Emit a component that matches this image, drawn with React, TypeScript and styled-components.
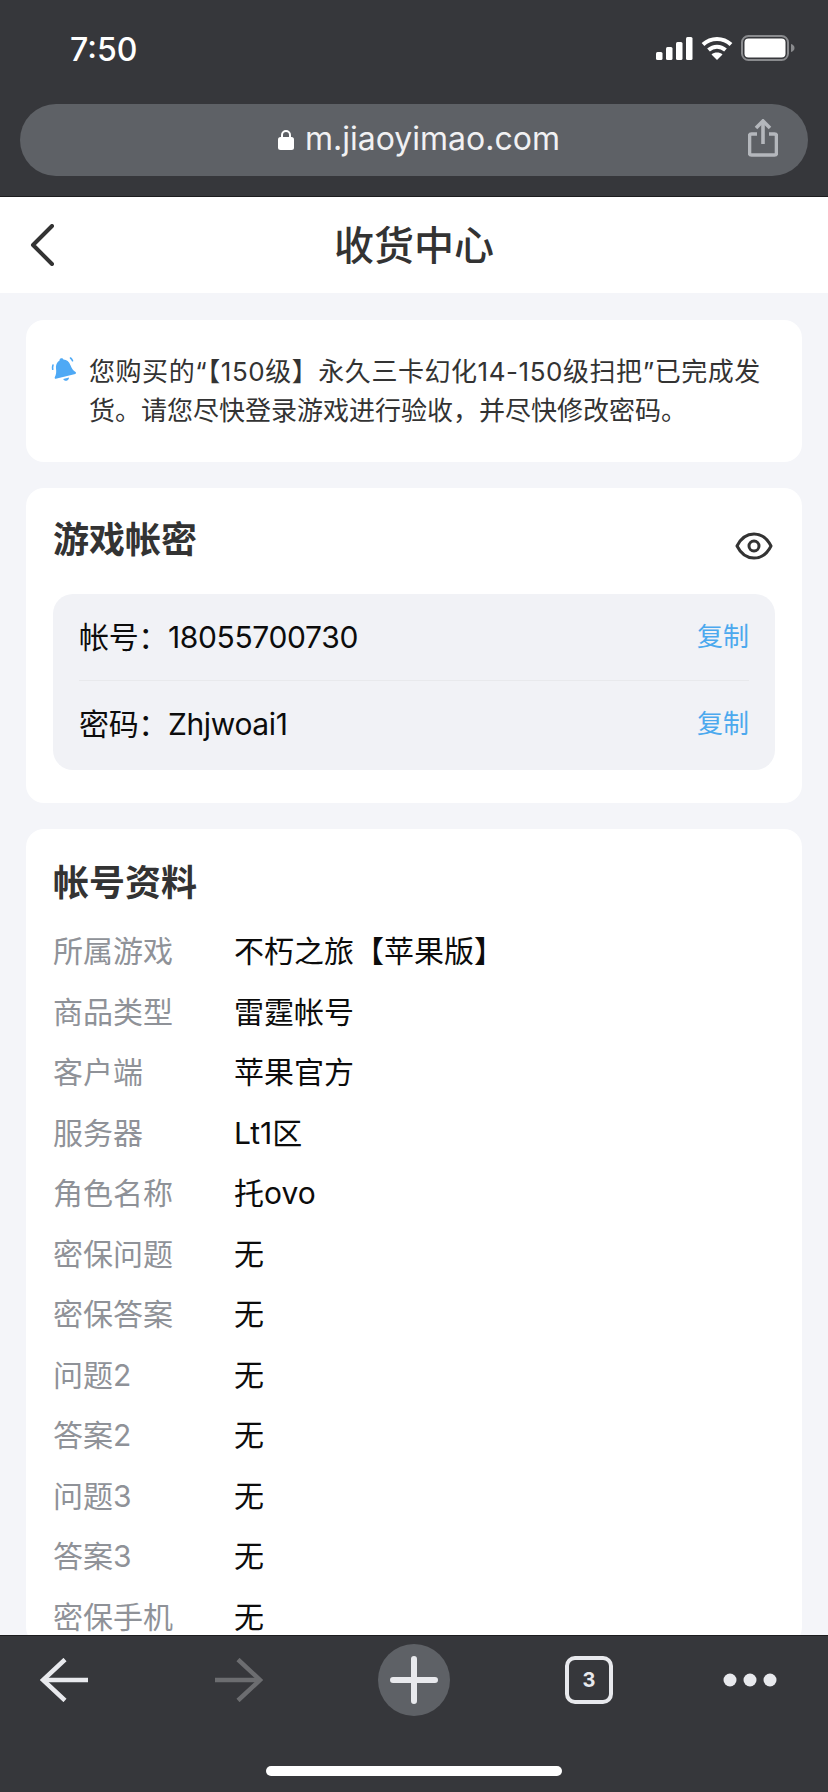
import React from 'react';
import styled, { createGlobalStyle } from 'styled-components';

const GlobalStyle = createGlobalStyle`
  html, body {
    margin: 0;
    padding: 0;
    background: #f4f5f9;
  }
  * {
    box-sizing: border-box;
  }
`;

const FONT = `Inter, "Noto Sans CJK SC", sans-serif`;

const Screen = styled.div`
  width: 828px;
  height: 1792px;
  display: flex;
  flex-direction: column;
  overflow: hidden;
  font-family: ${FONT};
  background: #f4f5f9;
`;

const TopChrome = styled.div`
  height: 197px;
  flex: none;
  background: #36373b;
  border-bottom: 1px solid #1c1c1e;
  padding: 0 20px;
`;

const StatusBar = styled.div`
  height: 104px;
  display: flex;
  align-items: flex-start;
  justify-content: space-between;
  padding: 32px 0 0 50px;
`;

const Time = styled.span`
  color: #fff;
  font-size: 32px;
  line-height: 36px;
  font-weight: 500;
`;

const StatusIcons = styled.div`
  display: flex;
  align-items: center;
  gap: 8px;
  margin-top: 3px;
  margin-right: 13px;
`;

const UrlBar = styled.div`
  height: 72px;
  width: 788px;
  border-radius: 36px;
  background: #5e6166;
  display: flex;
  align-items: center;
  justify-content: center;
  gap: 11px;
  padding: 0 0 2px 10px;
  position: relative;
`;

const UrlText = styled.span`
  color: #f1f1f3;
  font-size: 32px;
  line-height: 40px;
  font-weight: 400;
`;

const ShareButton = styled.span`
  position: absolute;
  right: 30px;
  top: 15px;
  display: flex;
`;

const NavBar = styled.header`
  height: 96px;
  flex: none;
  background: #fff;
  display: flex;
  align-items: center;
  justify-content: center;
  position: relative;
`;

const BackButton = styled.span`
  position: absolute;
  left: 29px;
  top: 27px;
  display: flex;
`;

const NavTitle = styled.h1`
  margin: 2px 0 0;
  color: #333;
  font-size: 40px;
  line-height: 50px;
  font-weight: 500;
`;

const Content = styled.main`
  flex: 1;
  min-height: 0;
  overflow: hidden;
  padding: 27px 26px 0;
  display: flex;
  flex-direction: column;
  gap: 26px;
`;

const Card = styled.section`
  flex: none;
  background: #fff;
  border-radius: 18px;
`;

const NoticeCard = styled(Card)`
  height: 142px;
  padding: 32px 30px 0 24px;
  display: flex;
  gap: 11px;
`;

const NoticeText = styled.p`
  margin: 0;
  color: #333;
  font-size: 26px;
  line-height: 39px;

  &::first-line {
    letter-spacing: 0.55px;
  }
`;

const BellWrap = styled.span`
  flex: none;
  margin-top: 3px;
  display: flex;
`;

const AccountCard = styled(Card)`
  height: 315px;
  padding: 29px 27px 0;
`;

const CardHeader = styled.div`
  display: flex;
  align-items: flex-start;
  justify-content: space-between;
  height: 77px;
`;

const CardTitle = styled.h2`
  margin: 0;
  color: #333;
  font-size: 36px;
  line-height: 46px;
  font-weight: 700;
`;

const EyeWrap = styled.span`
  display: flex;
  margin: 15px 2px 0 0;
`;

const CredentialPanel = styled.div`
  height: 176px;
  border-radius: 20px;
  background: #f1f2f6;
  padding: 0 26px;
`;

const CredentialRow = styled.div<{ $divided?: boolean }>`
  height: ${props => (props.$divided ? '87px' : '89px')};
  padding-bottom: ${props => (props.$divided ? '5px' : '8px')};
  display: flex;
  align-items: center;
  justify-content: space-between;
  border-bottom: ${props => (props.$divided ? '1px solid #e8e9ec' : 'none')};
  font-size: 30px;
  letter-spacing: -0.35px;
  color: #0c0c0c;
`;

const CopyLink = styled.span`
  color: #4ca9ee;
  font-size: 26px;
  letter-spacing: 0;
`;

const ProfileCard = styled(Card)`
  padding: 31px 27px 0;
`;

const ProfileTitle = styled(CardTitle)`
  margin-bottom: 13px;
`;

const ProfileRow = styled.div`
  height: 60.5px;
  display: flex;
  align-items: center;
  font-size: 30px;
`;

const ProfileLabel = styled.span`
  width: 181px;
  flex: none;
  color: #8f9298;
`;

const ProfileValue = styled.span`
  color: #0c0c0c;
`;

const BottomChrome = styled.footer`
  height: 157px;
  flex: none;
  background: #36373b;
  border-top: 1px solid #1c1c1e;
  display: flex;
  flex-direction: column;
  align-items: center;
`;

const ToolRow = styled.div`
  width: 100%;
  height: 130px;
  padding: 8px 0 50px 40px;
  display: flex;
  align-items: center;
`;

const ToolCell = styled.span<{ $gap: number }>`
  flex: none;
  margin-left: ${props => props.$gap}px;
  display: flex;
`;

const PlusCircle = styled.span`
  width: 72px;
  height: 72px;
  border-radius: 50%;
  background: #5e6166;
  display: flex;
  align-items: center;
  justify-content: center;
`;

const TabCount = styled.span`
  width: 48px;
  height: 48px;
  border: 4px solid #e8e9ed;
  border-radius: 10px;
  color: #e8e9ed;
  font-size: 20px;
  font-weight: 700;
  display: flex;
  align-items: center;
  justify-content: center;
`;

const HomeIndicator = styled.div`
  width: 296px;
  height: 10px;
  border-radius: 5px;
  background: #fff;
`;

const profile: [string, string][] = [
  ['所属游戏', '不朽之旅【苹果版】'],
  ['商品类型', '雷霆帐号'],
  ['客户端', '苹果官方'],
  ['服务器', 'Lt1区'],
  ['角色名称', '托ovo'],
  ['密保问题', '无'],
  ['密保答案', '无'],
  ['问题2', '无'],
  ['答案2', '无'],
  ['问题3', '无'],
  ['答案3', '无'],
  ['密保手机', '无'],
];

const Signal = () => (
  <svg width="37" height="23" viewBox="0 0 37 23" fill="#fff">
    <rect x="0" y="15" width="6.5" height="8" rx="1.5" />
    <rect x="10" y="10" width="6.5" height="13" rx="1.5" />
    <rect x="20" y="5" width="6.5" height="18" rx="1.5" />
    <rect x="30" y="0" width="6.5" height="23" rx="1.5" />
  </svg>
);

const Wifi = () => (
  <svg width="32" height="24" viewBox="0 0 32 24" fill="none" stroke="#fff" strokeWidth="4">
    <path d="M2 8.5C10 1 22 1 30 8.5" />
    <path d="M7.5 14C12.5 9.5 19.5 9.5 24.5 14" />
    <path d="M16 24l-5.500-5.500c3-2.600 8-2.600 11 0z" fill="#fff" stroke="none" />
  </svg>
);

const Battery = () => (
  <svg width="54" height="26" viewBox="0 0 54 26" fill="none">
    <rect x="1" y="1" width="46" height="24" rx="6.5" stroke="#8a8b8e" strokeWidth="2" />
    <rect x="3.5" y="3.5" width="41" height="19" rx="4" fill="#fff" />
    <path d="M50 9c2 .6 3.500 2 3.500 4s-1.500 3.400-3.500 4z" fill="#8a8b8e" />
  </svg>
);

const Lock = () => (
  <svg width="16" height="21" viewBox="0 0 16 21">
    <path d="M4 9V6a4 4 0 0 1 8 0v3" fill="none" stroke="#fff" strokeWidth="2" />
    <rect x="0" y="8" width="16" height="13" rx="2.500" fill="#fff" />
  </svg>
);

const Share = () => (
  <svg width="30" height="38" viewBox="0 0 30 38" fill="none" stroke="#b4b7bc" strokeWidth="3.600">
    <path d="M9 15H3.500a2 2 0 0 0-2 2v17a2 2 0 0 0 2 2h23a2 2 0 0 0 2-2V17a2 2 0 0 0-2-2H21" />
    <path d="M15 25V3" />
    <path d="M8 9l7-7 7 7" />
  </svg>
);

const Chevron = () => (
  <svg width="26" height="42" viewBox="0 0 26 42" fill="none" stroke="#333" strokeWidth="4" strokeLinecap="round">
    <path d="M23 2L4 21l19 19" strokeLinejoin="round" />
  </svg>
);

const Bell = () => (
  <svg width="28" height="30" viewBox="0 0 28 30" fill="#4ea9f5">
    <g transform="rotate(-14 14 15)">
      <path d="M14 3c1 0 1.800.7 2 1.600 3.200 1 5 3.600 5.400 7 .4 3.600 1.300 6 3.300 8.200.6.700.2 1.700-.7 1.700H4c-.9 0-1.300-1-.7-1.700 2-2.200 2.900-4.600 3.300-8.200.4-3.400 2.200-6 5.400-7 .2-.9 1-1.600 2-1.600z" />
      <path d="M11 23.500h6c-.4 1.700-1.500 2.500-3 2.500s-2.600-.8-3-2.500z" />
    </g>
    <path d="M3 10c-.5 1.400-.6 2.800-.3 4.300" fill="none" stroke="#4ea9f5" strokeWidth="1.600" strokeLinecap="round" />
    <path d="M20.500 3c.9.7 1.600 1.600 2 2.700" fill="none" stroke="#4ea9f5" strokeWidth="1.600" strokeLinecap="round" />
  </svg>
);

const Eye = () => (
  <svg width="38" height="28" viewBox="0 0 38 28" fill="none" stroke="#333" strokeWidth="3">
    <path d="M2 14C6 6 12 2 19 2s13 4 17 12c-4 8-10 12-17 12S6 22 2 14z" strokeLinejoin="round" />
    <circle cx="19" cy="14" r="5" />
  </svg>
);

const ArrowLeft = () => (
  <svg width="48" height="44" viewBox="0 0 48 44" fill="none" stroke="#e8e9ed" strokeWidth="4.500">
    <path d="M48 22H4" />
    <path d="M25 1.500L3 22l22 20.500" />
  </svg>
);

const ArrowRight = () => (
  <svg width="48" height="44" viewBox="0 0 48 44" fill="none" stroke="#6c6d70" strokeWidth="4.500">
    <path d="M0 22h44" />
    <path d="M23 1.500L45 22 23 42.500" />
  </svg>
);

const Plus = () => (
  <svg width="48" height="48" viewBox="0 0 48 48" stroke="#e8e9ed" strokeWidth="6" strokeLinecap="round">
    <path d="M24 3v42M3 24h42" />
  </svg>
);

const Dots = () => (
  <svg width="54" height="14" viewBox="0 0 54 14" fill="#e8e9ed">
    <circle cx="7" cy="7" r="6.500" />
    <circle cx="27" cy="7" r="6.500" />
    <circle cx="47" cy="7" r="6.500" />
  </svg>
);

export default function App() {
  return (
    <Screen>
      <GlobalStyle />
      <TopChrome>
        <StatusBar>
          <Time>7:50</Time>
          <StatusIcons>
            <Signal />
            <Wifi />
            <Battery />
          </StatusIcons>
        </StatusBar>
        <UrlBar>
          <Lock />
          <UrlText>m.jiaoyimao.com</UrlText>
          <ShareButton>
            <Share />
          </ShareButton>
        </UrlBar>
      </TopChrome>

      <NavBar>
        <BackButton>
          <Chevron />
        </BackButton>
        <NavTitle>收货中心</NavTitle>
      </NavBar>

      <Content>
        <NoticeCard>
          <BellWrap>
            <Bell />
          </BellWrap>
          <NoticeText>您购买的“【150级】永久三卡幻化14-150级扫把”已完成发货。请您尽快登录游戏进行验收，并尽快修改密码。</NoticeText>
        </NoticeCard>

        <AccountCard>
          <CardHeader>
            <CardTitle>游戏帐密</CardTitle>
            <EyeWrap>
              <Eye />
            </EyeWrap>
          </CardHeader>
          <CredentialPanel>
            <CredentialRow $divided>
              <span>帐号：18055700730</span>
              <CopyLink>复制</CopyLink>
            </CredentialRow>
            <CredentialRow>
              <span>密码：Zhjwoai1</span>
              <CopyLink>复制</CopyLink>
            </CredentialRow>
          </CredentialPanel>
        </AccountCard>

        <ProfileCard>
          <ProfileTitle>帐号资料</ProfileTitle>
          {profile.map(([label, value]) => (
            <ProfileRow key={label}>
              <ProfileLabel>{label}</ProfileLabel>
              <ProfileValue>{value}</ProfileValue>
            </ProfileRow>
          ))}
        </ProfileCard>
      </Content>

      <BottomChrome>
        <ToolRow>
          <ToolCell $gap={0}>
            <ArrowLeft />
          </ToolCell>
          <ToolCell $gap={127}>
            <ArrowRight />
          </ToolCell>
          <ToolCell $gap={115}>
            <PlusCircle>
              <Plus />
            </PlusCircle>
          </ToolCell>
          <ToolCell $gap={115}>
            <TabCount>3</TabCount>
          </ToolCell>
          <ToolCell $gap={110}>
            <Dots />
          </ToolCell>
        </ToolRow>
        <HomeIndicator />
      </BottomChrome>
    </Screen>
  );
}
